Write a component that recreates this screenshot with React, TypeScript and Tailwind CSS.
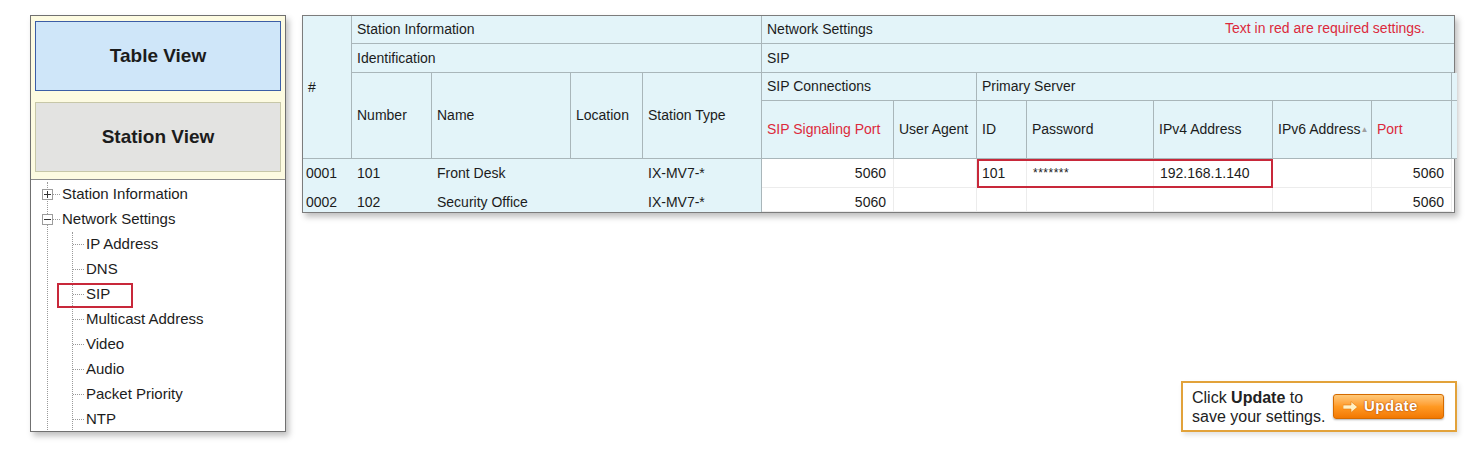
import React from "react";

const headCell =
  "flex items-center bg-[#e3f4f9] border-r border-b border-[#a9b6ba] pl-[5px] whitespace-nowrap";

function TreeBox({ open }: { open: boolean }) {
  return (
    <span className="w-[11px] h-[11px] -ml-[6px] border border-[#9c9c9c] bg-white flex items-center justify-center shrink-0">
      <svg width="7" height="7" viewBox="0 0 7 7">
        <line x1="0" y1="3.5" x2="7" y2="3.5" stroke="#333" strokeWidth="1" />
        {!open && <line x1="3.5" y1="0" x2="3.5" y2="7" stroke="#333" strokeWidth="1" />}
      </svg>
    </span>
  );
}

function ChildItem({ label, marked }: { label: string; marked?: boolean }) {
  return (
    <div className="relative flex items-center h-[25px]">
      <span className="w-[11px] border-t border-dotted border-[#9a9a9a]" />
      <span className="ml-[2px]">{label}</span>
      {marked && (
        <span className="absolute -left-[16px] top-[1px] w-[76px] h-[25px] border-2 border-[#c8283a]" />
      )}
    </div>
  );
}

function DataRow({
  num,
  number,
  name,
  type,
  first,
}: {
  num: string;
  number: string;
  name: string;
  type: string;
  first?: boolean;
}) {
  const align = first ? "items-center" : "items-start pt-[4px]";
  const white = `bg-white border-r border-b border-[#ececec] flex ${align}`;
  const blue = `bg-[#e3f4f9] flex ${align}`;
  return (
    <div className={`flex ${first ? "h-[29px]" : "h-[24px]"}`}>
      <div className={`w-[49px] pl-[3px] ${blue}`}>{num}</div>
      <div className={`w-[80px] pl-[5px] ${blue}`}>{number}</div>
      <div className={`w-[139px] pl-[5px] ${blue}`}>{name}</div>
      <div className={`w-[72px] ${blue}`} />
      <div className={`w-[119px] pl-[5px] border-r border-[#a9b6ba] ${blue}`}>{type}</div>
      <div className={`w-[132px] justify-end pr-[7px] ${white}`}>5060</div>
      <div className={`w-[83px] ${white}`} />
      {first ? (
        <div className="flex outline-2 outline-[#c8283a] -outline-offset-2 relative z-10">
          <div className={`w-[50px] pl-[5px] ${white}`}>101</div>
          <div className={`w-[127px] pl-[6px] text-[12px] tracking-[0.5px] ${white}`}>*******</div>
          <div className={`w-[119px] pl-[6px] ${white}`}>192.168.1.140</div>
        </div>
      ) : (
        <>
          <div className={`w-[50px] ${white}`} />
          <div className={`w-[127px] ${white}`} />
          <div className={`w-[119px] ${white}`} />
        </>
      )}
      <div className={`w-[99px] ${white}`} />
      <div className={`w-[80px] justify-end pr-[7px] ${white}`}>5060</div>
      <div className="w-[2px] bg-white" />
    </div>
  );
}

export default function App() {
  return (
    <div className="w-[1479px] h-[458px] bg-white font-['Liberation_Sans',Arial,sans-serif] text-[#1c1c1c] flex pl-[30px] pt-[15px] gap-[16px] overflow-hidden">
      {/* Left panel */}
      <div className="w-[256px] h-[417px] border border-[#707070] bg-white shadow-[3px_4px_6px_rgba(0,0,0,0.25)] flex flex-col overflow-hidden">
        <div className="bg-[#fdfbe1] px-[4px] pt-[5px] pb-[7px] flex flex-col gap-[11px] border-b border-[#8c8c8c]">
          <button className="h-[70px] bg-[#cfe6f9] border border-[#3c5ea6] text-[19px] font-bold">
            Table View
          </button>
          <button className="h-[70px] bg-[#e3e3e1] border border-[#c7c7a8] text-[19px] font-bold">
            Station View
          </button>
        </div>
        <div className="text-[15px] pt-[2px]">
          <div className="ml-[16px] border-l border-dotted border-[#9a9a9a]">
            <div className="flex items-center h-[25px]">
              <TreeBox open={false} />
              <span className="w-[7px] border-t border-dotted border-[#9a9a9a]" />
              <span className="ml-[2px]">Station Information</span>
            </div>
            <div className="flex items-center h-[25px]">
              <TreeBox open />
              <span className="w-[7px] border-t border-dotted border-[#9a9a9a]" />
              <span className="ml-[2px]">Network Settings</span>
            </div>
            <div className="ml-[24px] border-l border-dotted border-[#9a9a9a]">
              <ChildItem label="IP Address" />
              <ChildItem label="DNS" />
              <ChildItem label="SIP" marked />
              <ChildItem label="Multicast Address" />
              <ChildItem label="Video" />
              <ChildItem label="Audio" />
              <ChildItem label="Packet Priority" />
              <ChildItem label="NTP" />
            </div>
          </div>
        </div>
      </div>

      {/* Right column */}
      <div className="flex flex-col">
        <div className="border border-[#7c7c7c] shadow-[3px_4px_6px_rgba(0,0,0,0.25)] text-[14px] w-[1153px]">
          <div className="grid grid-cols-[49px_80px_139px_72px_119px_132px_83px_50px_127px_119px_99px_80px_2px] grid-rows-[28px_29px_28px_58px]">
            <div className={`${headCell} row-span-4 pl-[3px]`}>#</div>
            <div className={`${headCell} col-span-4`}>Station Information</div>
            <div className={`${headCell} col-span-8 border-r-0 justify-between pr-[29px]`}>
              <span>Network Settings</span>
              <span className="text-[14px] text-[#dc2a3c] -mt-[3px]">Text in red are required settings.</span>
            </div>
            <div className={`${headCell} col-span-4`}>Identification</div>
            <div className={`${headCell} col-span-8 border-r-0`}>SIP</div>
            <div className={`${headCell} row-span-2`}>Number</div>
            <div className={`${headCell} row-span-2`}>Name</div>
            <div className={`${headCell} row-span-2`}>Location</div>
            <div className={`${headCell} row-span-2`}>Station Type</div>
            <div className={`${headCell} col-span-2`}>SIP Connections</div>
            <div className={`${headCell} col-span-5`}>Primary Server</div>
            <div className={`${headCell} border-r-0`} />
            <div className={`${headCell} text-[#dc2a3c]`}>SIP Signaling Port</div>
            <div className={headCell}>User Agent</div>
            <div className={headCell}>ID</div>
            <div className={headCell}>Password</div>
            <div className={headCell}>IPv4 Address</div>
            <div className={headCell}>
              IPv6 Address<span className="text-[8px] text-[#a0a0a0] mt-[1px]">▲</span>
            </div>
            <div className={`${headCell} text-[#dc2a3c]`}>Port</div>
            <div className={`${headCell} border-r-0`} />
          </div>
          <DataRow num="0001" number="101" name="Front Desk" type="IX-MV7-*" first />
          <DataRow num="0002" number="102" name="Security Office" type="IX-MV7-*" />
        </div>

        <div className="self-end -mr-[2px] mt-[168px] w-[276px] h-[51px] border-2 border-[#e2a23a] bg-white flex items-center pl-[9px] pr-[11px] shadow-[2px_3px_5px_rgba(0,0,0,0.12)]">
          <div className="text-[16px] leading-[19px] text-[#222]">
            <div>
              Click <span className="font-bold">Update</span> to
            </div>
            <div>save your settings.</div>
          </div>
          <button className="ml-auto w-[111px] h-[25px] rounded-[3px] border border-[#d46a00] bg-linear-to-b from-[#ffc978] via-[#ff9a22] to-[#f27800] flex items-center pl-[9px] gap-[6px] shadow-[0_1px_2px_rgba(0,0,0,0.3)]">
            <svg width="15" height="12" viewBox="0 0 15 12">
              <path d="M0 4 H8 V0.5 L14.5 6 L8 11.5 V8 H0 Z" fill="#fff0c4" stroke="#e07a10" strokeWidth="0.6" />
            </svg>
            <span className="text-white text-[15px] font-bold tracking-[0.5px] [text-shadow:0_0_2px_#b04800,0_0_1px_#b04800]">
              Update
            </span>
          </button>
        </div>
      </div>
    </div>
  );
}
